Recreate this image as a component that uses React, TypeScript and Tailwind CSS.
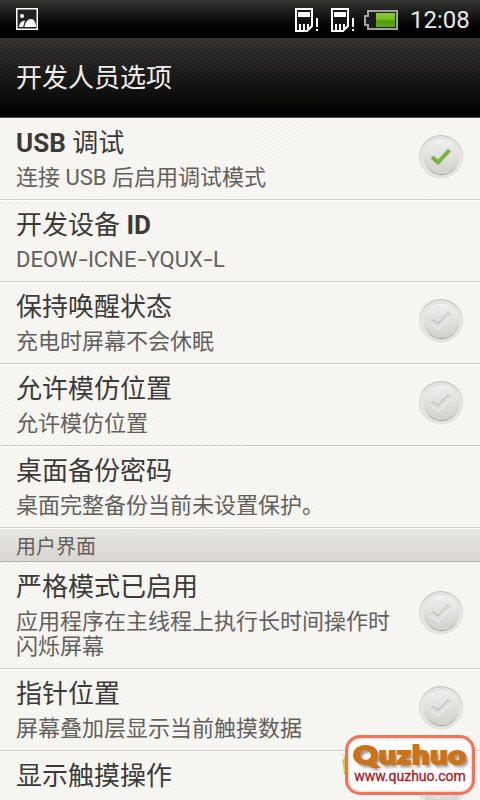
import React from 'react';

interface SettingItem {
  title: React.ReactNode;
  summary?: React.ReactNode;
  checked?: boolean;
  tall?: boolean;
}

const Dash = () => <span className="mx-[2.1px] inline-block scale-x-150">-</span>;

const generalItems: SettingItem[] = [
  { title: <><b>USB</b> 调试</>, summary: '连接 USB 后启用调试模式', checked: true },
  { title: <>开发设备 <b>ID</b></>, summary: <>DEOW<Dash />ICNE<Dash />YQUX<Dash />L</> },
  { title: '保持唤醒状态', summary: '充电时屏幕不会休眠', checked: false },
  { title: '允许模仿位置', summary: '允许模仿位置', checked: false },
  { title: '桌面备份密码', summary: '桌面完整备份当前未设置保护。' },
];

const uiItems: SettingItem[] = [
  { title: '严格模式已启用', summary: '应用程序在主线程上执行长时间操作时闪烁屏幕', checked: false, tall: true },
  { title: '指针位置', summary: '屏幕叠加层显示当前触摸数据', checked: false },
  { title: '显示触摸操作', checked: false },
];

const PictureIcon = () => (
  <svg width="22" height="22" viewBox="0 0 22 22">
    <rect x="0.75" y="0.75" width="20.5" height="20.5" fill="#222" stroke="#fff" strokeWidth="1.5" />
    <circle cx="6" cy="8" r="2" fill="#fff" />
    <path d="M3 19c0-3 2-6 6-6.500L7 19zM8.500 19c.5-5 3.500-8 6.500-8s5 3.500 5 8z" fill="#fff" />
  </svg>
);

const SimIcon = () => (
  <svg width="24" height="24" viewBox="0 0 24 24">
    <path d="M1 1h16v17l-5 5H1z" fill="#151515" stroke="#fff" strokeWidth="2" />
    <path d="M3 4h12v5H3z" fill="#fff" />
    <path d="M4 16h2v7H4zM8 16h2v7H8zM12 16h2v5h-2z" fill="#fff" />
    <path d="M21 10h2v9h-2zM21 21h2v2h-2z" fill="#fff" />
  </svg>
);

const BatteryIcon = () => (
  <svg width="34" height="20" viewBox="0 0 34 20">
    <defs>
      <linearGradient id="charge" x1="0" y1="0" x2="0" y2="1">
        <stop offset="0" stopColor="#8ccc32" />
        <stop offset="0.5" stopColor="#72bb17" />
        <stop offset="0.55" stopColor="#4d9a05" />
        <stop offset="1" stopColor="#62aa14" />
      </linearGradient>
    </defs>
    <path d="M4 1h29v18H4v-4H1V6h3z" fill="#1c1c1c" stroke="#a3a3a0" strokeWidth="2" />
    <rect x="12" y="3" width="19" height="14" fill="url(#charge)" />
  </svg>
);

const CheckKnob = ({ checked }: { checked: boolean }) => (
  <div className="flex h-11 w-11 shrink-0 items-center justify-center rounded-full bg-[#e6e3e0] shadow-[inset_0_1px_1px_#c0bebb,0_1px_0_#ffffff]">
    <div className="flex h-[33px] w-[33px] items-center justify-center rounded-full bg-linear-to-b from-[#efedeb] to-[#d3d1ce] shadow-[0_1px_1px_#9b9996,0_-1px_0_#fafaf9]">
      <svg width="22" height="18" viewBox="0 0 22 18" fill="none">
        {checked ? (
          <path d="M2 9l6 5.500L19.500 2" stroke="#78b33c" strokeWidth="4" />
        ) : (
          <>
            <path d="M2 9.800l6 5.500L19.500 2.800" stroke="#fafafa" strokeWidth="4" />
            <path d="M2 8.400l6 5.500L19.500 1.400" stroke="#b5b3b0" strokeWidth="3.800" />
            <path d="M2 9.200l6 5.500L19.500 2.200" stroke="#e0deda" strokeWidth="3.400" />
          </>
        )}
      </svg>
    </div>
  </div>
);

const SettingRow = ({ title, summary, checked, tall }: SettingItem) => (
  <li
    className={`flex shrink-0 justify-between border-b border-[#cfcdca] pl-4 pr-[17px] shadow-[0_1px_0_#ffffff] ${
      tall ? 'h-[107px]' : 'h-[82px]'
    }`}
  >
    <div className="w-[380px] pt-2">
      <h2 className="h-[39px] text-[26px] leading-[34px] text-[#3b3a38]">{title}</h2>
      {summary && <p className="text-[22px] leading-[25px] text-[#62605d]">{summary}</p>}
    </div>
    {checked !== undefined && (
      <div className={tall ? 'pt-[29px]' : 'pt-[17px]'}>
        <CheckKnob checked={checked} />
      </div>
    )}
  </li>
);

const Watermark = () => (
  <div className="absolute left-[345px] top-[735px] h-[60px] w-[130px]">
    <svg className="absolute -left-1 top-[18px]" width="14" height="26" viewBox="0 0 14 26">
      <path d="M1 0l3 4 4 1v20l-5-4-1-9-1-4 2-3z" fill="#c9cf45" />
    </svg>
    <div className="relative h-full rounded-[15px] border-[3px] border-[#f27458] bg-white/90 shadow-[inset_0_0_2px_#f27458]">
      <div className="mt-[3px] flex h-[27px] justify-center whitespace-nowrap">
        <span className="scale-x-[1.2] font-['Lato'] text-[25px] font-black leading-[27px] tracking-[1px] text-[#cc721b] [-webkit-text-stroke:2.2px_#cc721b] [text-shadow:2px_3px_3px_#777777]">
          Quzhuo
        </span>
      </div>
      <div className="whitespace-nowrap text-center text-[14px] leading-[16px] text-[#a32029] [-webkit-text-stroke:0.3px_#a32029]">
        www.quzhuo.com
      </div>
    </div>
  </div>
);

export default function App() {
  return (
    <div className="relative flex h-[800px] w-[480px] flex-col overflow-hidden bg-[#f6f5f1] font-['Roboto','Noto_Sans_CJK_SC',sans-serif]">
      {/* Status bar */}
      <div className="flex h-[38px] shrink-0 items-center bg-linear-to-b from-[#373736] to-black pl-4 pr-[10px]">
        <PictureIcon />
        <div className="ml-auto flex items-center pt-[2px]">
          <SimIcon />
          <div className="ml-3"><SimIcon /></div>
          <div className="ml-[9px]"><BatteryIcon /></div>
          <span className="ml-3 w-[60px] whitespace-nowrap text-[24px] leading-[38px] text-[#e9e7e5]">12:08</span>
        </div>
      </div>

      {/* Title bar */}
      <header className="flex h-20 shrink-0 items-center border-b border-t-2 border-b-[#55534f] border-t-[#353432] bg-[linear-gradient(to_bottom,transparent,#000000),repeating-linear-gradient(135deg,#3b3a38_0px,#2a2927_1.414px,#3b3a38_2.828px)] pb-[2px] pl-4">
        <h1 className="text-[26px] leading-[34px] text-[#f1efec]">开发人员选项</h1>
      </header>

      <div className="flex min-h-0 flex-1 flex-col bg-[repeating-linear-gradient(135deg,#fbfaf7_0px,#f1f0eb_1.414px,#fbfaf7_2.828px)]">
        <ul className="flex flex-col">
          {generalItems.map((item, i) => (
            <SettingRow key={i} {...item} />
          ))}
        </ul>
        <div className="flex h-[34px] shrink-0 items-center border-b border-t border-b-[#b5b3b0] border-t-white bg-linear-to-b from-[#e8e6df] to-[#d9d5d3] pl-4 pt-[5px] text-[20px] leading-[27px] text-[#62605d]">
          用户界面
        </div>
        <ul className="flex flex-col">
          {uiItems.map((item, i) => (
            <SettingRow key={i} {...item} />
          ))}
        </ul>
      </div>

      <Watermark />
    </div>
  );
}
